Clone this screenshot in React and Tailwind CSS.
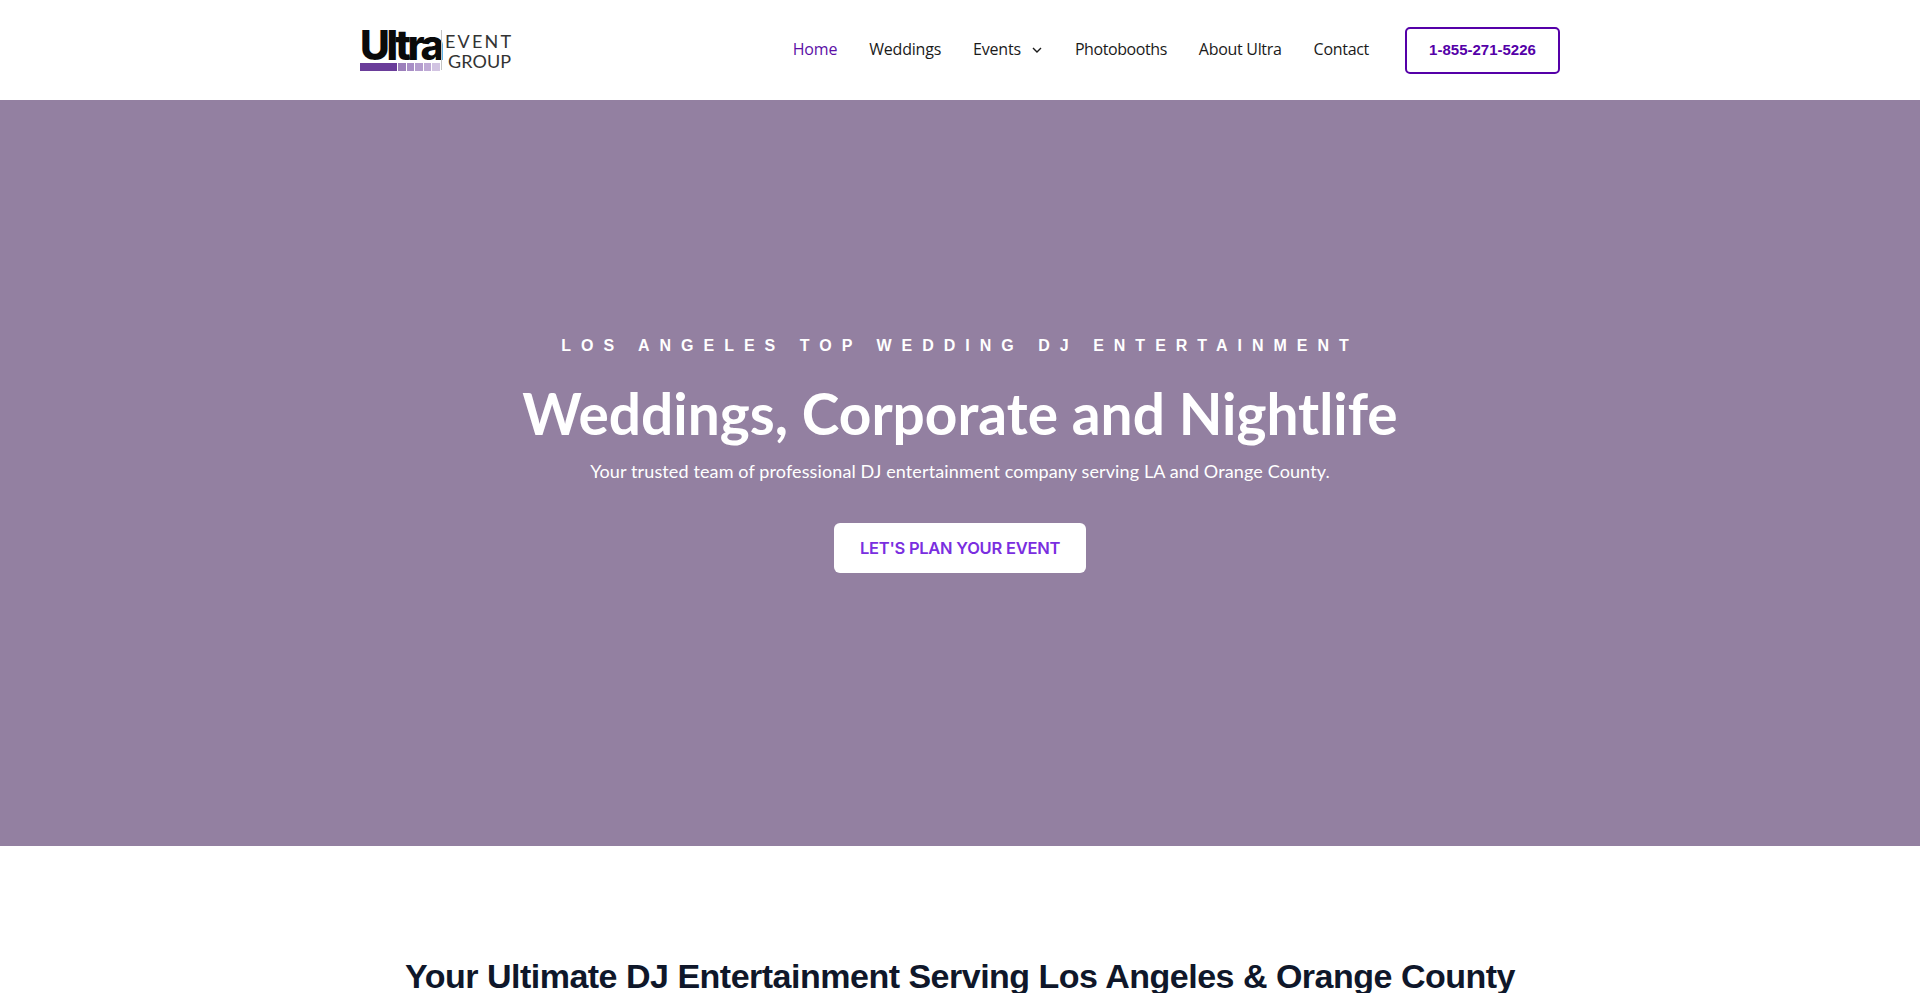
import React from "react";

function Logo() {
  return (
    <a className="flex items-start w-[152px] h-[40px] shrink-0" href="#">
      <div className="flex flex-col w-[80px]">
        <span className="font-['Inter',sans-serif] font-extrabold text-[41px] leading-[30px] h-[31px] tracking-[-3.4px] text-[#0a0a0a] whitespace-nowrap">Ultra</span>
        <div className="flex gap-[1px] h-[8px] mt-[2px]">
          <span className="w-[37px] bg-[#6a3d9a]" />
          <span className="w-[7.6px] bg-[#9c7fbb]" />
          <span className="w-[7.6px] bg-[#a88ec6]" />
          <span className="w-[7.6px] bg-[#b49dce]" />
          <span className="w-[7.6px] bg-[#bfaad6]" />
          <span className="w-[7.6px] bg-[#d2c4e2]" />
        </div>
      </div>
      <div className="ml-[1px] pl-[3px] border-l border-[#c4c4c4] h-[40px] font-['Lato',sans-serif] text-[18px] leading-[20px] text-[#333333] flex flex-col pt-[1px]">
        <span className="tracking-[2.2px]">EVENT</span>
        <span className="tracking-[0.1px] pl-[3px]">GROUP</span>
      </div>
    </a>
  );
}

export default function App() {
  return (
    <div className="h-screen overflow-hidden bg-white font-['Liberation_Sans',sans-serif]">
      <header className="h-[100px] bg-white">
        <div className="w-[1200px] mx-auto h-full flex items-center justify-between">
          <Logo />
          <nav className="flex items-center font-['Open_Sans',sans-serif] text-[16px] tracking-[-0.2px] text-[#1a1a1a]">
            <a className="text-[#5b0ea6] mr-[32px] -mt-[3px]" href="#">Home</a>
            <a className="mr-[32px] -mt-[3px]" href="#">Weddings</a>
            <a className="mr-[32px] -mt-[3px] flex items-center gap-[10px]" href="#">
              Events
              <svg width="12" height="12" viewBox="0 0 12 12" fill="none" stroke="#1a1a1a" strokeWidth="1.4" className="mt-[3px]"><path d="M2 4l4 4 4-4" /></svg>
            </a>
            <a className="mr-[32px] -mt-[3px] tracking-[-0.42px]" href="#">Photobooths</a>
            <a className="mr-[32px] -mt-[3px] tracking-[-0.3px]" href="#">About Ultra</a>
            <a className="mr-[36px] -mt-[3px] tracking-[-0.3px]" href="#">Contact</a>
            <a className="flex items-center justify-center w-[155px] h-[47px] pt-[1px] border-2 border-[#5500a8] rounded-[5px] font-['Liberation_Sans',sans-serif] font-bold text-[15px] tracking-normal text-[#5500a8]" href="#">1-855-271-5226</a>
          </nav>
        </div>
      </header>
      <section className="h-[746px] bg-[#9380a1] flex flex-col items-center text-white">
        <p className="mt-[236px] font-bold text-[16px] leading-[20px] tracking-[10px]">LOS ANGELES TOP WEDDING DJ ENTERTAINMENT</p>
        <h1 className="mt-[23px] font-['Lato',sans-serif] font-bold text-[56.8px] leading-[68px]">Weddings, Corporate and Nightlife</h1>
        <p className="mt-[11px] font-['Lato',sans-serif] text-[18px] tracking-[0.12px] leading-[26px]">Your trusted team of professional DJ entertainment company serving LA and Orange County.</p>
        <a className="mt-[39px] flex items-center justify-center w-[252px] h-[50px] bg-white rounded-[6px] font-['Inter',sans-serif] font-semibold text-[16.5px] tracking-[-0.25px] text-[#7a2ee0]" href="#">LET'S PLAN YOUR EVENT</a>
      </section>
      <section className="pt-[108px] flex justify-center">
        <h2 className="font-bold text-[34px] leading-[44px] tracking-[-0.5px] text-[#0f172a]">Your Ultimate DJ Entertainment Serving Los Angeles &amp; Orange County</h2>
      </section>
    </div>
  );
}
